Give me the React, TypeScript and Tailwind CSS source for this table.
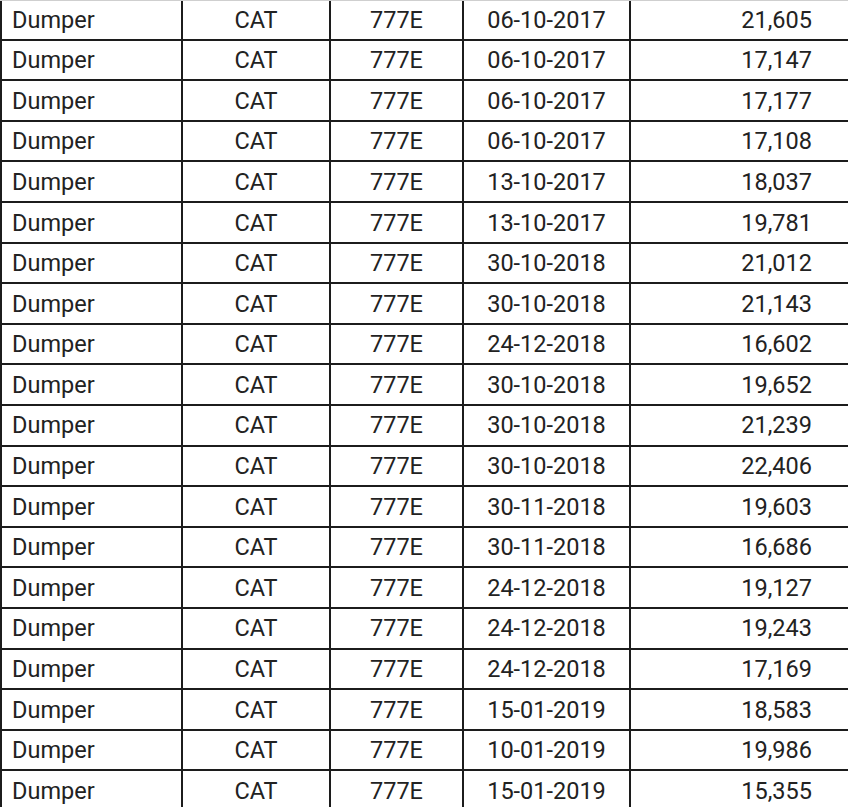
import React from 'react';

const rows: [string, string][] = [
  ['06-10-2017', '21,605'],
  ['06-10-2017', '17,147'],
  ['06-10-2017', '17,177'],
  ['06-10-2017', '17,108'],
  ['13-10-2017', '18,037'],
  ['13-10-2017', '19,781'],
  ['30-10-2018', '21,012'],
  ['30-10-2018', '21,143'],
  ['24-12-2018', '16,602'],
  ['30-10-2018', '19,652'],
  ['30-10-2018', '21,239'],
  ['30-10-2018', '22,406'],
  ['30-11-2018', '19,603'],
  ['30-11-2018', '16,686'],
  ['24-12-2018', '19,127'],
  ['24-12-2018', '19,243'],
  ['24-12-2018', '17,169'],
  ['15-01-2019', '18,583'],
  ['10-01-2019', '19,986'],
  ['15-01-2019', '15,355'],
];

const App = () => {
  return (
    <div
      className="w-[848px] h-[807px] overflow-hidden bg-white text-[#222222] text-[23.5px] leading-none"
      style={{ fontFamily: 'Roboto, "Liberation Sans", sans-serif' }}
    >
      {rows.map(([date, qty], i) => (
        <div
          key={i}
          className={`grid grid-cols-[181px_148px_133px_167px_1fr] h-[40.6px] border-b-2 border-[#1c1c1c] ${
            i === 0 ? 'border-t border-t-[#cfcfcf]' : ''
          }`}
        >
          <div className="flex items-center pt-[2px] pl-[10px] border-l-2 border-[#1c1c1c]">Dumper</div>
          <div className="flex items-center justify-center pt-[2px] border-l-2 border-[#1c1c1c]">CAT</div>
          <div className="flex items-center justify-center pt-[2px] border-l-2 border-[#1c1c1c]">777E</div>
          <div className="flex items-center justify-center pt-[2px] border-l-2 border-[#1c1c1c]">{date}</div>
          <div className="flex items-center justify-end pt-[2px] pr-[36px] border-l-2 border-[#1c1c1c]">{qty}</div>
        </div>
      ))}
    </div>
  );
};

export default App;
